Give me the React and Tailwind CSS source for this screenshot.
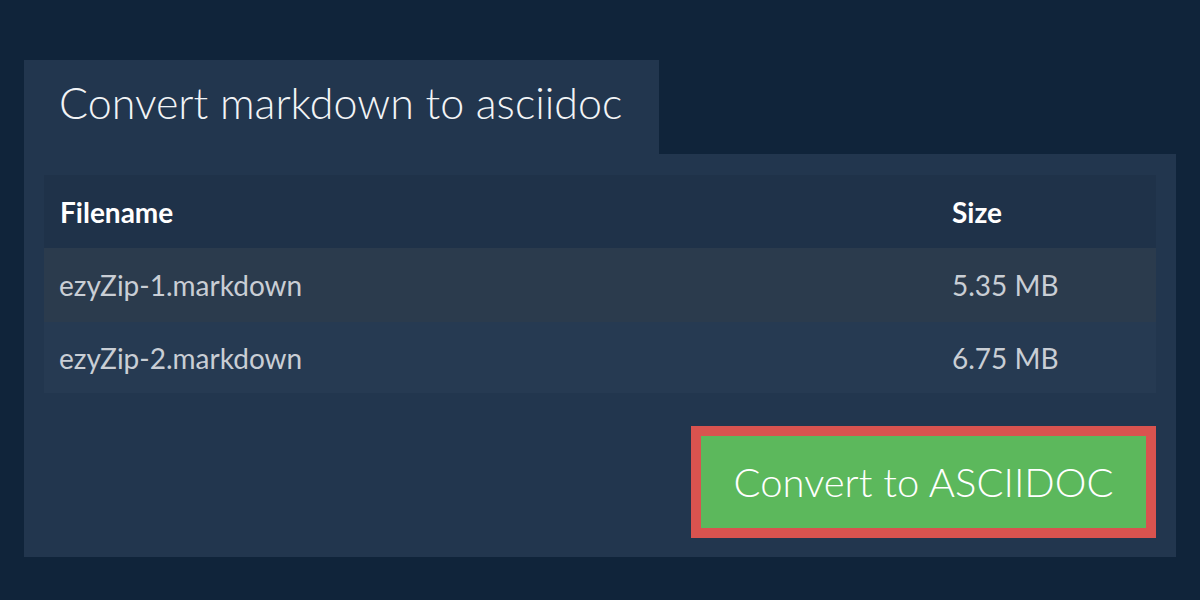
import React from "react";

const files = [
  { name: "ezyZip-1.markdown", size: "5.35 MB" },
  { name: "ezyZip-2.markdown", size: "6.75 MB" },
];

export default function App() {
  return (
    <div className="w-[1200px] h-[600px] bg-[#10243a] px-[24px] pt-[60px] font-['Lato','Noto_Sans',sans-serif]">
      {/* tab */}
      <div className="w-[635px] h-[94px] bg-[#22364e] pl-[35px] pt-[15px]">
        <h1 className="text-[43px] leading-[56px] font-light text-[#f2f4f6]">
          Convert markdown to asciidoc
        </h1>
      </div>

      {/* panel */}
      <div className="bg-[#22364e] px-[20px] pt-[21px] pb-[19px]">
        <table className="w-full border-collapse text-[28px]">
          <thead>
            <tr className="bg-[#1f3249] h-[73px]">
              <th className="text-left font-bold text-white pl-[16px]">Filename</th>
              <th className="text-left font-bold text-white pl-[16px] w-[220px]">Size</th>
            </tr>
          </thead>
          <tbody>
            {files.map((f, i) => (
              <tr
                key={f.name}
                className={i === 0 ? "bg-[#2b3b4d] h-[74px]" : "bg-[#263a52] h-[71px]"}
              >
                <td className="pl-[15px] text-[#c9ced5]">{f.name}</td>
                <td className="pl-[16px] text-[#c9ced5]">{f.size}</td>
              </tr>
            ))}
          </tbody>
        </table>

        <div className="flex justify-end mt-[33px]">
          <button className="w-[465px] h-[112px] bg-[#5cb85c] border-[10px] border-[#d9534f] text-white text-[40px] font-light">
            Convert to ASCIIDOC
          </button>
        </div>
      </div>
    </div>
  );
}
